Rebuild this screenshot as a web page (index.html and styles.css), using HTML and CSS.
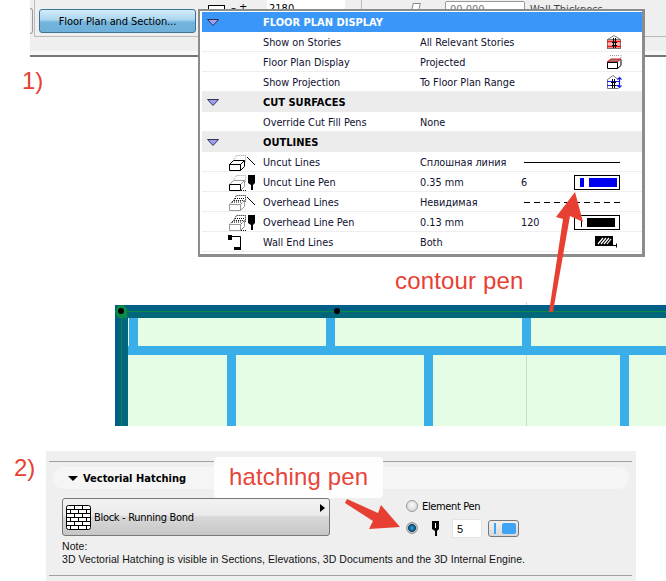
FILE: index.html
```html
<!DOCTYPE html>
<html lang="en">
<head>
<meta charset="utf-8">
<title>Floor Plan and Section</title>
<link rel="stylesheet" href="styles.css">
</head>
<body>
<div class="page">
  <header class="toolbar">
    <div class="stub"></div>
    <div class="tool-cell"><button class="fp-button">Floor Plan and Section...</button></div>
    <div class="tool-cell2"><span class="mini-icon"></span><span class="mini-glyphs">– ±</span><span class="field field-a">2180</span></div>
    <div class="tool-cell3"><span class="mini-box"></span><span class="field field-b">00.000</span><span class="cut-label">Wall Thickness</span></div>
  </header>

  <svg class="plan" width="551" height="124" viewBox="115 302 551 124">
    <rect x="115" y="318" width="551" height="108" fill="#e5fde5"/>
    <rect x="526" y="302" width="1" height="124" fill="#ccd8cc"/>
    <g fill="#3aaee8">
      <rect x="128" y="346" width="538" height="9"/>
      <rect x="129" y="318" width="9" height="28"/>
      <rect x="326" y="318" width="9" height="28"/>
      <rect x="522" y="318" width="9" height="28"/>
      <rect x="227" y="355" width="9" height="71"/>
      <rect x="424" y="355" width="9" height="71"/>
      <rect x="620" y="355" width="9" height="71"/>
    </g>
    <rect x="115" y="305" width="551" height="6" fill="#005f87"/>
    <rect x="115" y="312" width="551" height="6" fill="#00687a"/>
    <rect x="115" y="305" width="6" height="121" fill="#005f87"/>
    <rect x="122" y="312" width="6" height="114" fill="#00687a"/>
    <rect x="115" y="311" width="551" height="1" fill="#0a8a45"/>
    <rect x="121" y="311" width="1" height="115" fill="#0a8a45"/>
    <path d="M116 311a5.500 5.500 0 0 1 11-1v8h-6a5 5 0 0 1-5-7z" fill="#0a8a45"/>
    <circle cx="121" cy="311" r="3" fill="#000"/>
    <circle cx="337" cy="311" r="3" fill="#000"/>
  </svg>

  <section class="hatch">
    <div class="hatch-inner">
      <div class="pill"><span class="pill-tri"></span><span class="pill-title">Vectorial Hatching</span></div>
      <div class="hatch-body">
        <div class="pop-btn">
          <svg class="brick" width="25" height="25" viewBox="0 0 25 25">
            <rect x=".5" y=".5" width="24" height="24" rx="2" fill="#fff" stroke="#000"/>
            <path d="M1 4.500h23M1 8.500h23M1 12.500h23M1 16.500h23M1 20.500h23M8.500 1v3.500M16.500 1v3.500M4.500 4.500v4M12.500 4.500v4M20.500 4.500v4M8.500 8.500v4M16.500 8.500v4M4.500 12.500v4M12.500 12.500v4M20.500 12.500v4M8.500 16.500v4M16.500 16.500v4M4.500 20.500v4M12.500 20.500v4M20.500 20.500v4" fill="none" stroke="#000"/>
          </svg>
          <span class="pop-label">Block - Running Bond</span>
          <span class="pop-tri"></span>
        </div>
        <div class="pen-opts">
          <div class="opt-row"><span class="radio"></span><span class="opt-label">Element Pen</span></div>
          <div class="opt-row opt-row2">
            <span class="radio radio-on"></span>
            <svg class="opt-pen" width="8" height="15" viewBox="0 0 8 15"><path d="M0 0h7v8l-2 2v5H3v-5L0 8z" fill="#000"/><path d="M3 2h1v5H3z" fill="#fff"/></svg>
            <span class="pen-input">5</span>
            <span class="pen-btn"><i class="pb-thin"></i><i class="pb-fat"></i></span>
          </div>
        </div>
      </div>
      <p class="note">Note:<br>3D Vectorial Hatching is visible in Sections, Elevations, 3D Documents and the 3D Internal Engine.</p>
    </div>
  </section>

  <div class="popup">
    <div class="row head active"><svg class="tri" width="12" height="7" viewBox="0 0 12 7"><path d="M.5.500h11L6 6.500z" fill="#a0a0f0" stroke="#303050"/></svg><b class="lab">FLOOR PLAN DISPLAY</b></div>
    <div class="row"><span></span><span class="lab">Show on Stories</span><span class="val">All Relevant Stories</span><span></span>
      <svg class="end-icon" width="16" height="16" viewBox="0 0 16 16"><path d="M1.500 5.500 8 1.500l6.500 4" fill="none" stroke="#777"/><rect x="1.500" y="5.500" width="13" height="9" fill="#f8b8b8" stroke="#777"/><path d="M1 7.500h14M1 12.500h14" stroke="#e81010" stroke-width="1.400"/><rect x="7" y="4" width="1" height="10" fill="#000"/><rect x="9" y="4" width="1" height="10" fill="#000"/><path d="M6 8.500h5M6 11.500h5" stroke="#000"/></svg></div>
    <div class="row"><span></span><span class="lab">Floor Plan Display</span><span class="val">Projected</span><span></span>
      <svg class="end-icon" width="16" height="16" viewBox="0 0 16 16"><path d="M4 1.500h10M15 1v4" stroke="#999" stroke-dasharray="1 1" fill="none"/><path d="M1 8 5 5h10l-4 3z" fill="#888" stroke="#e01010"/><path d="M1.500 8.500h10v6h-10zM11.500 14.500l3.500-3V5.500" fill="#fff" stroke="#000"/></svg></div>
    <div class="row"><span></span><span class="lab">Show Projection</span><span class="val">To Floor Plan Range</span><span></span>
      <svg class="end-icon" width="16" height="16" viewBox="0 0 16 16"><path d="M1.500 5.500 7 1.500l5 4M1.500 5.500v9h11" fill="none" stroke="#777"/><path d="M1 7.500h12M1 11.500h12" stroke="#1c1ce8"/><rect x="6" y="5" width="1" height="9" fill="#000"/><rect x="8" y="5" width="1" height="9" fill="#000"/><path d="M5 8.500h5M5 11.500h5" stroke="#000"/><path d="M13.500 3.500v10M11.500 5.500l2-2 2 2M11.500 11.500l2 2 2-2" fill="none" stroke="#1c1ce8" stroke-width="1.200"/></svg></div>
    <div class="row head"><svg class="tri" width="12" height="7" viewBox="0 0 12 7"><path d="M.5.500h11L6 6.500z" fill="#a0a0f0" stroke="#303050"/></svg><b class="lab">CUT SURFACES</b></div>
    <div class="row"><span></span><span class="lab">Override Cut Fill Pens</span><span class="val">None</span></div>
    <div class="row head"><svg class="tri" width="12" height="7" viewBox="0 0 12 7"><path d="M.5.500h11L6 6.500z" fill="#a0a0f0" stroke="#303050"/></svg><b class="lab">OUTLINES</b></div>
    <div class="row"><svg class="out-icon" width="26" height="17" viewBox="0 0 26 17"><path d="M4.500 6.500l3-5h9v7" fill="none" stroke="#999" stroke-dasharray="1 1"/><path d="M.5 10.500l4-4h11l-4 4zM.5 10.500h11v6H.5zM11.500 16.500l4-4v-6" fill="#fff" stroke="#000"/><path d="M18 3l8 8" stroke="#000"/></svg><span class="lab">Uncut Lines</span><span class="val">Сплошная линия</span><span class="line solid"></span></div>
    <div class="row"><svg class="out-icon" width="26" height="17" viewBox="0 0 26 17"><path d="M4.500 6.500l3-5h9v7" fill="none" stroke="#999" stroke-dasharray="1 1"/><path d="M.5 10.500l4-4h11l-4 4zM11.500 16.500l4-4v-6" fill="#fff" stroke="#999"/><path d="M.5 10.500h11v6H.5z" fill="#fff" stroke="#000"/><path d="M12 16.500h6" stroke="#000" stroke-dasharray="1 1"/><path d="M19 1h7v8l-2 2v5h-2v-5l-3-2z" fill="#000"/></svg><span class="lab">Uncut Line Pen</span><span class="val">0.35 mm</span><span class="num">6</span><span class="swatch"><i class="sw-thin blue"></i><i class="sw-fat blue"></i></span></div>
    <div class="row"><svg class="out-icon" width="26" height="17" viewBox="0 0 26 17"><path d="M4.500 6.500l3-5h9v7M.5 10.500l4-4h11l-4 4zM6 4.500h9M3 8h9" fill="none" stroke="#000" stroke-dasharray="1 1"/><path d="M.5 10.500h11v6H.5zM11.500 16.500l4-4v-6" fill="#fff" stroke="#999"/><path d="M18 3l8 8" stroke="#000"/></svg><span class="lab">Overhead Lines</span><span class="val">Невидимая</span><span class="line dashed"></span></div>
    <div class="row"><svg class="out-icon" width="26" height="17" viewBox="0 0 26 17"><path d="M4.500 6.500l3-5h9v7M.5 10.500l4-4h11l-4 4zM6 4.500h9M3 8h9" fill="none" stroke="#000" stroke-dasharray="1 1"/><path d="M.5 10.500h11v6H.5zM11.500 16.500l4-4v-6" fill="#fff" stroke="#999"/><path d="M12 16.500h6" stroke="#000" stroke-dasharray="1 1"/><path d="M19 1h7v8l-2 2v5h-2v-5l-3-2z" fill="#000"/></svg><span class="lab">Overhead Line Pen</span><span class="val">0.13 mm</span><span class="num">120</span><span class="swatch"><i class="sw-hair"></i><i class="sw-fat"></i></span></div>
    <div class="row"><svg class="out-icon end-wall" width="13" height="15" viewBox="0 0 13 15"><path d="M0 0h4v5H0z" fill="#000"/><path d="M3 1.500h9.500V13" fill="none" stroke="#000"/><path d="M6 12h7v3H6z" fill="#000"/></svg><span class="lab">Wall End Lines</span><span class="val">Both</span><span></span>
      <svg class="end-icon hatch-icon" width="22" height="12" viewBox="0 0 22 12"><rect width="18" height="10" fill="#000"/><path d="M3 8l5-6M6 8l5-6M9 8l5-6M12 8l4-5" stroke="#fff" stroke-width="1.200"/><path d="M18 9.500h3M21.500 7.500v4" stroke="#000"/></svg></div>
  </div>

  <span class="note-num n1">1)</span>
  <span class="note-num n2">2)</span>
  <span class="callout c1">contour pen</span>
  <span class="callout c2">hatching pen</span>

  <svg class="arrows" width="666" height="581" viewBox="0 0 666 581">
    <path d="M575 192 583 222 570 216 553 312 549 312 563 219 556 217Z" fill="#e74032"/>
    <path d="M345 503 347 499 378 513 381 505 400 527 369 529 373 521Z" fill="#e74032"/>
  </svg>
</div>
</body>
</html>
```
FILE: styles.css
```css
* { box-sizing: border-box; }
html, body { margin: 0; padding: 0; background: #fff; }
body { font-family: "DejaVu Sans Condensed", "Liberation Sans", Arial, sans-serif; font-size: 11px; color: #000; }

.page { position: relative; width: 666px; height: 581px; overflow: hidden; background: #fff; }

/* top toolbar */
.toolbar {
  display: flex; height: 57px; margin-left: 30px; background: #efefef;
  border-bottom: 2px solid #777; box-shadow: inset 0 -4px 0 #f8f8f8;
}
.stub { width: 3px; height: 26px; margin: 8px 1px 0 0; border: 1px solid #999; border-left: 0; border-radius: 0 3px 3px 0; }
.tool-cell { width: 164px; height: 37px; padding: 9px 3px 0 4px; border-left: 1px solid #bbb; border-bottom: 1px solid #bbb; }
.fp-button {
  display: block; width: 157px; height: 24px; padding: 0; font: 11px "DejaVu Sans Condensed", "Liberation Sans", Arial, sans-serif; letter-spacing: -.1px; color: #000;
  border: 1px solid #3f7396; border-radius: 3px;
  background: linear-gradient(#d4ecfa 0, #a9d5ef 45%, #74b4dd 55%, #6fb0da 100%);
}
.tool-cell2 { display: flex; width: 164px; height: 37px; border-right: 1px solid #bbb; border-bottom: 1px solid #bbb; }
.mini-icon { width: 17px; height: 10px; margin: 5px 0 0 10px; border: 1px solid #000; background: #fff; }
.mini-glyphs { width: 42px; padding: 2px 0 0 6px; line-height: 12px; white-space: pre; }
.field { display: block; height: 16px; background: #fff; font-size: 11px; line-height: 16px; }
.field-a { width: 78px; padding-left: 2px; padding-top: 1px; }
.tool-cell3 { display: flex; flex: 1; height: 37px; border-bottom: 1px solid #bbb; padding-left: 50px; }
.mini-box { width: 8px; height: 8px; margin: 3px 25px 0 0; border: 1px solid #888; background: #fff; transform: skewX(-12deg); }
.field-b { width: 80px; margin-top: 1px; padding-left: 4px; color: #777; border: 1px solid #999; border-radius: 2px; }
.cut-label { margin: 3px 0 0 5px; color: #444; line-height: 14px; }

/* plan */
.plan { display: block; margin: 245px 0 0 115px; }

/* hatching panel */
.hatch { width: 590px; height: 130px; margin: 25px 0 0 46px; padding: 10px 4px 0 3px; background: #efefef; }
.hatch-inner { height: 115px; border-top: 1px solid #a0a0a0; border-bottom: 1px solid #a0a0a0; padding: 5px 3px 0 4px; }
.pill { display: flex; align-items: center; height: 22px; border-radius: 11px; background: #f5f5f5; padding-left: 15px; }
.pill-tri { width: 0; height: 0; border: 5px solid transparent; border-top: 5px solid #000; border-bottom: 0; }
.pill-title { margin-left: 5px; font-weight: bold; font-size: 11px; }
.hatch-body { display: flex; margin-top: 9px; padding-left: 9px; }
.pop-btn {
  position: relative; display: flex; align-items: center; width: 268px; height: 38px; padding-left: 3px;
  border: 1px solid #777; border-radius: 3px;
  background: linear-gradient(#f2f2f2 0, #eaeaea 45%, #d8d8d8 50%, #c6c6c6 100%);
}
.brick { display: block; }
.pop-label { margin-left: 3px; font-size: 11px; letter-spacing: -.3px; }
.pop-tri { position: absolute; top: 5px; right: 4px; width: 0; height: 0; border: 4px solid transparent; border-left: 5px solid #000; border-right: 0; }
.pen-opts { display: flex; flex-direction: column; margin: 2px 0 0 76px; }
.opt-row { display: flex; align-items: center; height: 12px; }
.opt-row2 { margin-top: 10px; }
.radio { width: 12px; height: 12px; border-radius: 50%; border: 1px solid #999; background: radial-gradient(circle at 50% 40%, #f8f8f8 0, #d0d0d0 100%); }
.radio-on { background: radial-gradient(circle, #35a7e6 0, #0e5d8f 40%, #0c3e5e 50%, #c8c8c8 62%); }
.opt-label { margin-left: 4px; font-size: 11px; letter-spacing: -.35px; }
.opt-pen { margin-left: 14px; }
.pen-input { width: 30px; height: 19px; margin-left: 12px; padding-left: 4px; background: #fff; border: 1px solid #e4e4e4; border-radius: 2px; font: 11px/18px "Liberation Sans", Arial, sans-serif; }
.pen-btn { display: flex; align-items: center; width: 31px; height: 17px; margin-left: 6px; padding: 0 2px 0 5px; border: 1px solid #777; border-radius: 3px; background: linear-gradient(#f0f0f0, #d8d8d8); }
.pb-thin { width: 2px; height: 11px; background: #3fa4f5; }
.pb-fat { width: 14px; height: 11px; margin-left: 6px; background: #3fa4f5; border-radius: 2px; }
.note { margin: 4px 0 0 9px; font-family: "Liberation Sans", Arial, sans-serif; font-size: 10.500px; line-height: 13px; letter-spacing: .05px; color: #111; }

/* popup */
.popup {
  position: absolute; left: 198px; top: 9px; width: 447px; height: 248px; padding: 1px 0 0 2px;
  background: #fff; border: 2px solid #8c8c8c; border-right-width: 3px; border-bottom-width: 3px;
}
.row {
  display: grid; grid-template-columns: 61px 157px 101px 53px 1fr; align-items: center;
  height: 20px; box-shadow: inset 0 -1px 0 #eee; color: #101030; font-size: 10.800px;
}
.row.head { background: #ececec; color: #000; box-shadow: none; font-size: 11px; }
.row.active { background: #3a97f8; color: #fff; }
.tri { margin-left: 5px; }
.lab { grid-column: 2; }
.head .lab { grid-column: 2 / 4; }
.num { grid-column: 4; }
.end-icon { grid-column: 5; justify-self: end; margin-right: 20px; }
.hatch-icon { margin-right: 25px; }
.out-icon { justify-self: end; margin-right: 8px; }
.end-wall { margin-right: 22px; }
.line { grid-column: 4 / 6; height: 1px; margin: 0 22px 0 3px; background: #000; }
.line.dashed { background: repeating-linear-gradient(90deg, #000 0 6px, transparent 6px 10px); }
.swatch { display: flex; align-items: center; width: 46px; height: 15px; padding: 0 2px 0 4px; border: 1px solid #000; grid-column: 5; }
.sw-thin { width: 4px; height: 9px; background: #0000f0; margin-left: 1px; }
.sw-hair { width: 1px; height: 9px; background: #000; margin: 0 4px 0 2px; }
.sw-fat { width: 28px; height: 9px; margin-left: 5px; background: #000; }
.sw-hair + .sw-fat { margin-left: 1px; }
.sw-fat.blue { background: #0000f0; }

/* annotations */
.note-num, .callout { position: absolute; font-size: 24px; line-height: 28px; color: #e74032; font-family: "Liberation Sans", Arial, sans-serif; }
.callout { letter-spacing: .15px; }
.n1 { left: 22px; top: 67px; }
.n2 { left: 14px; top: 454px; }
.c1 { left: 395px; top: 267px; }
.c2 { left: 214px; top: 457px; width: 169px; height: 41px; padding: 6px 0 0 15px; background: #fff; border-radius: 4px; opacity: .97; }
.arrows { position: absolute; left: 0; top: 0; pointer-events: none; }
```
